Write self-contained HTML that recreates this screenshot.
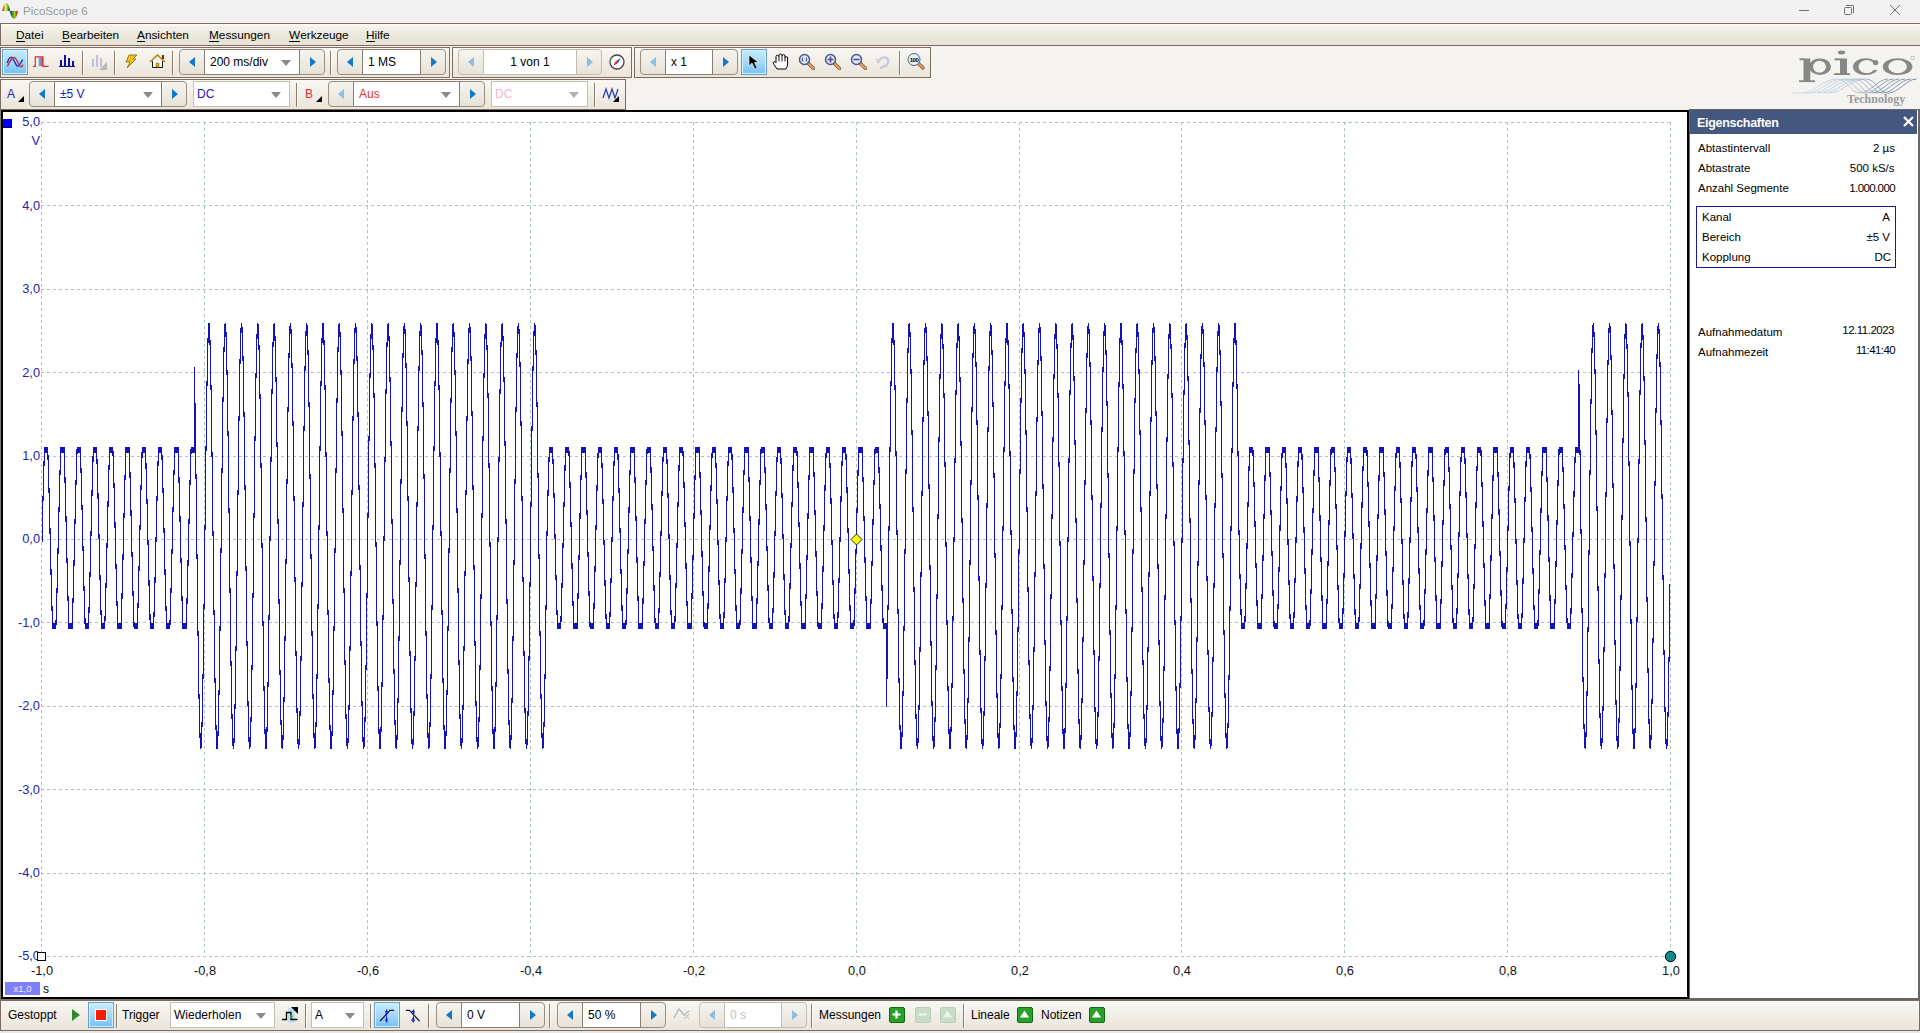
<!DOCTYPE html>
<html><head><meta charset="utf-8">
<style>
*{box-sizing:border-box;margin:0;padding:0}
html,body{width:1920px;height:1033px;overflow:hidden;background:#f5f3ef;font-family:"Liberation Sans",sans-serif;font-size:11.5px;color:#000}
.a{position:absolute}
#title{left:0;top:0;width:1920px;height:23px;background:#f2f1f2}
#title .t{left:23px;top:5px;color:#999;font-size:11.5px}
#menu{left:0;top:23px;width:1920px;height:23px;border-top:1px solid #7c6c5e;border-bottom:1px solid #7c6c5e;border-left:1px solid #7c6c5e;background:linear-gradient(#fefdf8 0px,#f3f1e9 3px,#ebe8dc 12px,#e8e4d6 16px,#ebe3d8 21px)}
#menu span{position:absolute;top:3.5px;font-size:11.8px;color:#000}
#menu u{text-decoration:none;border-bottom:1px solid #000;display:inline-block;line-height:11px}
.band{position:absolute;border:1px solid #7c6c5e;background:linear-gradient(#f8f7f3,#ebe5da)}
.sep{position:absolute;width:2px;background:#8a7d70;border-right:1px solid #fcfaf6}
.nav{position:absolute;height:26px;border:1px solid #9b8d80;border-radius:4px;background:linear-gradient(#f6f4f0,#e7e2d8)}
.nav .in{position:absolute;top:0;bottom:0;background:#fff;border-left:1px solid #9b8d80;border-right:1px solid #9b8d80}
.tri{position:absolute;width:0;height:0;border-top:5px solid transparent;border-bottom:5px solid transparent}
.tl{border-right:6px solid #1a7ccc}
.tr{border-left:6px solid #1a7ccc}
.dis.tl{border-right-color:#82b4dc}
.dis.tr{border-left-color:#82b4dc}
.dd{position:absolute;width:0;height:0;border-left:5px solid transparent;border-right:5px solid transparent;border-top:6px solid #8a8a8a}
.combo{position:absolute;height:26px;background:#fff;border:1px solid #b8b0a6}
.txt{position:absolute;white-space:pre}
.selbtn{position:absolute;background:linear-gradient(#c8ecfc,#a6d8fa 50%,#74c0f8);border:1px solid #6c9ccc;box-shadow:inset 0 0 0 1px #d0f2ff}
#scope{left:1px;top:110px;width:1688px;height:889px;border:2px solid #000;background:#fff;overflow:hidden}
.yl{position:absolute;left:0;width:40px;text-align:right;color:#2525a8;font-size:12.8px}
.xl{position:absolute;top:963px;width:60px;text-align:center;color:#111;font-size:12.8px}
#panel{left:1689px;top:109px;width:231px;height:891px;background:#fff;border-right:2px solid #666;border-bottom:2px solid #666;border-top:1px solid #666;border-left:1px solid #666}
#phead{left:0;top:0;width:227px;height:24px;background:#44577e;color:#fff;font-weight:bold;font-size:12.5px;letter-spacing:-0.3px}
.pr{position:absolute;font-size:11.5px;white-space:pre}
#bottom{left:0;top:1000px;width:1920px;height:31px;border:1px solid #7c6c5e;background:linear-gradient(#f8f7f3,#ebe5da)}
</style></head><body>

<!-- title bar -->
<div id="title" class="a">
  <svg class="a" style="left:0;top:0" width="22" height="22">
    <defs><linearGradient id="ig1" x1="2" x2="10" y1="0" y2="0" gradientUnits="userSpaceOnUse"><stop offset="0" stop-color="#6a1a10"/><stop offset="0.3" stop-color="#e8a030"/><stop offset="0.45" stop-color="#f4f080"/><stop offset="0.65" stop-color="#70e030"/><stop offset="1" stop-color="#101870"/></linearGradient>
    <linearGradient id="ig2" x1="10" x2="18" y1="0" y2="0" gradientUnits="userSpaceOnUse"><stop offset="0" stop-color="#101870"/><stop offset="0.35" stop-color="#30b020"/><stop offset="0.6" stop-color="#c0c030"/><stop offset="0.8" stop-color="#b05010"/><stop offset="1" stop-color="#601010"/></linearGradient></defs>
    <path d="M2.2 11C3.5 5 5 3 6.3 3S9 5.5 10.2 11z" fill="url(#ig1)"/>
    <path d="M9.8 11C11 16.5 12.5 18.8 14 18.8S16.8 16.5 17.9 11z" fill="url(#ig2)"/>
  </svg>
  <div class="a t">PicoScope 6</div>
  <div class="a" style="left:1799px;top:10px;width:10px;height:1px;background:#707070"></div>
  <div class="a" style="left:1844px;top:7px;width:8px;height:8px;border:1px solid #707070;border-radius:1.5px"></div>
  <div class="a" style="left:1846px;top:5px;width:8px;height:8px;border-top:1px solid #707070;border-right:1px solid #707070;border-top-right-radius:2px"></div>
  <svg class="a" style="left:1890px;top:5px" width="10" height="10"><path d="M0 0L10 10M10 0L0 10" stroke="#707070" stroke-width="1"/></svg>
</div>

<!-- menu -->
<div id="menu" class="a">
  <span style="left:15px"><u>D</u>atei</span>
  <span style="left:61px"><u>B</u>earbeiten</span>
  <span style="left:136px"><u>A</u>nsichten</span>
  <span style="left:208px"><u>M</u>essungen</span>
  <span style="left:288px"><u>W</u>erkzeuge</span>
  <span style="left:365px"><u>H</u>ilfe</span>
</div>



<!-- toolbars -->
<div class="band" style="left:0px;top:47px;width:450px;height:31px"></div><div class="band" style="left:452px;top:47px;width:180px;height:31px"></div><div class="band" style="left:634px;top:47px;width:297px;height:31px"></div><div class="selbtn" style="left:2px;top:49px;width:26px;height:26px"></div><svg class="a" style="left:0;top:46px" width="30" height="30"><path d="M7.2 17C8.5 13 10 11.2 11.4 11.2C13.5 11.2 15.5 20.1 17.7 20.1C19.5 20.1 21 16.5 22.6 13.6" fill="none" stroke="#2838c8" stroke-width="1.5"/><path d="M7.4 20.5C9.5 16 12 11.5 14.3 11.5C16.5 11.5 19 20.8 21.1 20.8C22 20.8 22.6 19.6 22.9 18.6" fill="none" stroke="#c83048" stroke-width="1.5"/></svg><svg class="a" style="left:28px;top:48px" width="24" height="22"><defs><linearGradient id="pg" x1="0" x2="1" y1="0" y2="0"><stop offset="0" stop-color="#70b8e8"/><stop offset="1" stop-color="#c84060"/></linearGradient></defs><rect x="10.5" y="9.3" width="4.5" height="9" fill="url(#pg)"/><path d="M5 18.4H7.3V8.8H15V18.4H20.5" fill="none" stroke="#d83030" stroke-width="1.2"/></svg><svg class="a" style="left:59px;top:54px" width="17" height="13"><path d="M0 12.5H16" stroke="#101090" stroke-width="1.2"/><rect x="1" y="6" width="2" height="6" fill="#1010a0"/><rect x="5" y="1" width="2" height="11" fill="#1010a0"/><rect x="9" y="4" width="2" height="8" fill="#1010a0"/><rect x="13" y="7" width="2" height="5" fill="#1010a0"/></svg><div class="sep" style="left:82px;top:51px;height:24px"></div><svg class="a" style="left:91px;top:54px" width="17" height="16"><rect x="1" y="5" width="2" height="8" fill="#c0c0dc"/><rect x="5" y="1" width="2" height="12" fill="#c0c0dc"/><rect x="9" y="4" width="2" height="9" fill="#c0c0dc"/><path d="M16 8V16H8z" fill="#b8b8b8"/></svg><div class="sep" style="left:114px;top:51px;height:24px"></div><svg class="a" style="left:124px;top:54px" width="14" height="15"><path d="M5 1H13L9 5H12L3 14L6 8H2z" fill="#e8c020" stroke="#a07a10" stroke-width="1"/></svg><svg class="a" style="left:149px;top:54px" width="17" height="15"><path d="M1 8L8.5 1L16 8" fill="none" stroke="#b08a10" stroke-width="1.6"/><rect x="13" y="1" width="2" height="4" fill="#902020"/><path d="M3.5 7V13.5H13.5V7" fill="#fff" stroke="#1a1a1a" stroke-width="1"/><rect x="7" y="9" width="3" height="4" fill="#d8a820" stroke="#806010" stroke-width="0.5"/></svg><div class="sep" style="left:172px;top:51px;height:24px"></div><div class="nav" style="left:179px;top:49px;width:146px;height:26px;border-color:#9b8d80"></div><div class="a" style="left:204px;top:49px;width:96px;height:26px;background:#fff;border:1px solid #8c7d70;border-left-width:1px"></div><svg class="a" style="left:189px;top:57px" width="6" height="10"><path d="M6 0V10L0 5z" fill="#1478c8"/></svg><svg class="a" style="left:310px;top:57px" width="6" height="10"><path d="M0 0V10L6 5z" fill="#1478c8"/></svg><div class="txt" style="left:210px;top:55px;color:#000;font-size:12px;">200 ms/div</div><svg class="a" style="left:281px;top:60px" width="10" height="6"><path d="M0 0H10L5 6z" fill="#8a8a8a"/></svg><div class="sep" style="left:330px;top:51px;height:24px"></div><div class="nav" style="left:337px;top:49px;width:109px;height:26px;border-color:#9b8d80"></div><div class="a" style="left:362px;top:49px;width:59px;height:26px;background:#fff;border:1px solid #8c7d70;border-left-width:1px"></div><svg class="a" style="left:347px;top:57px" width="6" height="10"><path d="M6 0V10L0 5z" fill="#1478c8"/></svg><svg class="a" style="left:431px;top:57px" width="6" height="10"><path d="M0 0V10L6 5z" fill="#1478c8"/></svg><div class="txt" style="left:368px;top:55px;color:#000;font-size:12px;">1 MS</div><div class="nav" style="left:458px;top:49px;width:144px;height:26px;border-color:#c4bcb2"></div><div class="a" style="left:483px;top:49px;width:94px;height:26px;background:#fff;border:1px solid #c4bcb2;border-left-width:1px"></div><svg class="a" style="left:468px;top:57px" width="6" height="10"><path d="M6 0V10L0 5z" fill="#8cbde3"/></svg><svg class="a" style="left:587px;top:57px" width="6" height="10"><path d="M0 0V10L6 5z" fill="#8cbde3"/></svg><div class="txt" style="left:483px;top:55px;width:94px;text-align:center;color:#000;font-size:12px">1 von 1</div><svg class="a" style="left:609px;top:54px" width="16" height="16"><circle cx="8" cy="8" r="7" fill="#fff" stroke="#444" stroke-width="1.3"/><path d="M12 4L7 7L9 9z" fill="#3050e0"/><path d="M4 12L7 7L9 9z" fill="#e02020"/></svg><div class="nav" style="left:640px;top:49px;width:98px;height:26px;border-color:#9b8d80"></div><div class="a" style="left:665px;top:49px;width:48px;height:26px;background:#fff;border:1px solid #8c7d70;border-left-width:1px"></div><svg class="a" style="left:650px;top:57px" width="6" height="10"><path d="M6 0V10L0 5z" fill="#8cbde3"/></svg><svg class="a" style="left:723px;top:57px" width="6" height="10"><path d="M0 0V10L6 5z" fill="#1478c8"/></svg><div class="txt" style="left:671px;top:55px;color:#000;font-size:12px;">x 1</div><div class="selbtn" style="left:741px;top:49px;width:26px;height:26px"></div><svg class="a" style="left:748px;top:54px" width="12" height="16"><path d="M1 1V12L4 9L7 15L9 14L6.5 8.5H10.5z" fill="#000" stroke="#fff" stroke-width="0.6"/></svg><svg class="a" style="left:772px;top:53px" width="17" height="17"><path d="M5 16L2 11.5Q0.3 9.3 2 8.6Q3 8.3 4 9.8L4 3.6Q4 2.2 5.5 2.2Q7 2.2 7 3.6L7 2.4Q7 1 8.5 1Q10 1 10 2.4L10 3Q10 1.6 11.5 1.6Q13 1.6 13 3L13 5Q13 3.6 14.3 3.6Q15.6 3.6 15.6 5L15.6 11Q15.6 14 13.8 16Z" fill="#fff" stroke="#000" stroke-width="1"/><path d="M7 3.5V8.5M10 3V8.5M13 5V8.5" stroke="#000" stroke-width="0.9"/></svg><svg class="a" style="left:798px;top:53px" width="17" height="17"><path d="M10 10L15.5 15.5" stroke="#8a5a30" stroke-width="3.4" stroke-linecap="round"/><path d="M10 10L15.5 15.5" stroke="#e0a070" stroke-width="1.8" stroke-linecap="round"/><circle cx="6.5" cy="6.5" r="5" fill="#dceefa" stroke="#4a5a88" stroke-width="1.5"/><path d="M5 4.5Q3.6 6.5 5 8.5M8 4.5Q9.4 6.5 8 8.5" fill="none" stroke="#5050a0" stroke-width="1.1"/></svg><svg class="a" style="left:824px;top:53px" width="17" height="17"><path d="M10 10L15.5 15.5" stroke="#8a5a30" stroke-width="3.4" stroke-linecap="round"/><path d="M10 10L15.5 15.5" stroke="#e0a070" stroke-width="1.8" stroke-linecap="round"/><circle cx="6.5" cy="6.5" r="5" fill="#dceefa" stroke="#4a5a88" stroke-width="1.5"/><path d="M6.5 3.5V9.5M3.5 6.5H9.5" stroke="#6040a0" stroke-width="1.6"/></svg><svg class="a" style="left:850px;top:53px" width="17" height="17"><path d="M10 10L15.5 15.5" stroke="#8a5a30" stroke-width="3.4" stroke-linecap="round"/><path d="M10 10L15.5 15.5" stroke="#e0a070" stroke-width="1.8" stroke-linecap="round"/><circle cx="6.5" cy="6.5" r="5" fill="#dceefa" stroke="#4a5a88" stroke-width="1.5"/><path d="M3.5 6.5H9.5" stroke="#6040a0" stroke-width="1.6"/></svg><svg class="a" style="left:876px;top:55px" width="15" height="15"><path d="M4 13L9.5 11C13 9 13 3 9 2.5C6 2 4 4 3 6" fill="none" stroke="#c8ccd8" stroke-width="2.4"/><path d="M0 3L5 8L1 8z" fill="#c8ccd8"/></svg><div class="sep" style="left:899px;top:51px;height:24px"></div><svg class="a" style="left:907px;top:53px" width="19" height="17"><path d="M11 10L16 15" stroke="#8a5a30" stroke-width="3.2" stroke-linecap="round"/><path d="M11 10L16 15" stroke="#e8a070" stroke-width="1.7" stroke-linecap="round"/><circle cx="7" cy="6.5" r="6" fill="#e4f2fc" stroke="#506080" stroke-width="1"/><text x="7" y="8.7" font-size="6" font-weight="bold" text-anchor="middle" font-family="Liberation Sans" fill="#000" letter-spacing="-0.5">100</text></svg><div class="band" style="left:0px;top:79px;width:626px;height:31px"></div><div class="txt" style="left:7px;top:87px;color:#2020c0;font-size:12px;">A</div><svg class="a" style="left:18px;top:96px" width="6" height="6"><path d="M6 0V6H0z" fill="#000"/></svg><div class="nav" style="left:29px;top:81px;width:158px;height:26px;border-color:#9b8d80"></div><div class="a" style="left:54px;top:81px;width:108px;height:26px;background:#fff;border:1px solid #8c7d70;border-left-width:1px"></div><svg class="a" style="left:39px;top:89px" width="6" height="10"><path d="M6 0V10L0 5z" fill="#1478c8"/></svg><svg class="a" style="left:172px;top:89px" width="6" height="10"><path d="M0 0V10L6 5z" fill="#1478c8"/></svg><div class="txt" style="left:60px;top:87px;color:#2020c0;font-size:12px;">±5 V</div><svg class="a" style="left:143px;top:92px" width="10" height="6"><path d="M0 0H10L5 6z" fill="#8a8a8a"/></svg><div class="a" style="left:193px;top:81px;width:97px;height:26px;background:#fff;border:1px solid #c6beb4"></div><div class="txt" style="left:197px;top:87px;color:#2020c0;font-size:12px;">DC</div><svg class="a" style="left:271px;top:92px" width="10" height="6"><path d="M0 0H10L5 6z" fill="#8a8a8a"/></svg><div class="sep" style="left:296px;top:83px;height:24px"></div><div class="txt" style="left:305px;top:87px;color:#e03030;font-size:12px;">B</div><svg class="a" style="left:316px;top:96px" width="6" height="6"><path d="M6 0V6H0z" fill="#000"/></svg><div class="nav" style="left:328px;top:81px;width:157px;height:26px;border-color:#9b8d80"></div><div class="a" style="left:353px;top:81px;width:107px;height:26px;background:#fff;border:1px solid #8c7d70;border-left-width:1px"></div><svg class="a" style="left:338px;top:89px" width="6" height="10"><path d="M6 0V10L0 5z" fill="#8cbde3"/></svg><svg class="a" style="left:470px;top:89px" width="6" height="10"><path d="M0 0V10L6 5z" fill="#1478c8"/></svg><div class="txt" style="left:359px;top:87px;color:#e03030;font-size:12px;">Aus</div><svg class="a" style="left:441px;top:92px" width="10" height="6"><path d="M0 0H10L5 6z" fill="#8a8a8a"/></svg><div class="a" style="left:491px;top:81px;width:97px;height:26px;background:#fff;border:1px solid #c6beb4"></div><div class="txt" style="left:495px;top:87px;color:#f0b8c8;font-size:12px;">DC</div><svg class="a" style="left:569px;top:92px" width="10" height="6"><path d="M0 0H10L5 6z" fill="#b0b0b0"/></svg><div class="sep" style="left:594px;top:83px;height:24px"></div><svg class="a" style="left:602px;top:87px" width="18" height="16"><path d="M1 11L4 2L7 11L10 2L13 11L16 2" fill="none" stroke="#3040b0" stroke-width="1.3"/><path d="M17 9V15H11z" fill="#000"/></svg>

<!-- logo -->
<svg class="a" style="left:1790px;top:45px" width="130" height="63">
  <defs><linearGradient id="lg" x1="0" x2="130" y1="0" y2="0" gradientUnits="userSpaceOnUse"><stop offset="0" stop-color="#d4e4f0"/><stop offset="0.45" stop-color="#b4cce0"/><stop offset="0.7" stop-color="#8498ac"/><stop offset="1" stop-color="#6e7e92"/></linearGradient></defs>
  <g fill="none" stroke-width="0.9"><path d="M10.0 48C25.0 48 32.0 34 47.0 34C58.0 34 60.0 48 70.0 48C80.0 48 88.0 34 98.0 34" stroke="url(#lg)"/><path d="M15.7 48C30.7 48 37.7 34 52.7 34C63.7 34 65.7 48 75.7 48C85.7 48 93.7 34 103.7 34" stroke="url(#lg)"/><path d="M21.4 48C36.4 48 43.4 34 58.4 34C69.4 34 71.4 48 81.4 48C91.4 48 99.4 34 109.4 34" stroke="url(#lg)"/><path d="M27.1 48C42.1 48 49.1 34 64.1 34C75.1 34 77.1 48 87.1 48C97.1 48 105.1 34 115.1 34" stroke="url(#lg)"/><path d="M32.8 48C47.8 48 54.8 34 69.8 34C80.8 34 82.8 48 92.8 48C102.8 48 110.8 34 120.8 34" stroke="url(#lg)"/><path d="M38.5 48C53.5 48 60.5 34 75.5 34C86.5 34 88.5 48 98.5 48C108.5 48 116.5 34 126.5 34" stroke="url(#lg)"/>
    <path d="M2 48H20" stroke="#cfe0ee"/>
  </g>
  <g fill="#878787">
    <rect x="13.5" y="13.5" width="6.8" height="23"/>
    <rect x="9" y="35.3" width="16" height="1.8"/>
    <rect x="9.5" y="13.3" width="5" height="2"/>
    <path fill-rule="evenodd" d="M19 21.7a11 8.3 0 1 0 22 0a11 8.3 0 1 0 -22 0zM23 21.7a6.5 6 0 1 0 13 0a6.5 6 0 1 0 -13 0z"/>
    <rect x="50" y="13.5" width="7" height="16.3"/>
    <rect x="44" y="28.2" width="16" height="1.8"/>
    <rect x="44.5" y="13.3" width="6" height="2"/>
    <ellipse cx="51.5" cy="7.5" rx="3.6" ry="1.9"/>
    <path fill-rule="evenodd" d="M63 21.7a12.7 8.4 0 1 0 25.4 0a12.7 8.4 0 1 0 -25.4 0zM68.5 21.7a8.2 6.6 0 1 0 16.4 0a8.2 6.6 0 1 0 -16.4 0z"/>
    <path fill-rule="evenodd" d="M92.8 21.7a14.8 8.4 0 1 0 29.6 0a14.8 8.4 0 1 0 -29.6 0zM98.3 21.7a9.3 6.6 0 1 0 18.6 0a9.3 6.6 0 1 0 -18.6 0z"/>
  </g>
  <rect x="79" y="18.8" width="11" height="6.3" fill="#f5f3ef"/>
  <circle cx="85.6" cy="17.6" r="2.7" fill="#878787"/>
  <circle cx="122.5" cy="13" r="1.8" fill="none" stroke="#a0a0a0" stroke-width="0.6"/>
  <text x="57" y="58.3" font-family="Liberation Serif" font-weight="bold" font-size="12" fill="#9a9a9a">Technology</text>
</svg>

<!-- scope -->
<div id="scope" class="a"></div>
<svg class="a" style="left:0;top:0" width="1690" height="1000" shape-rendering="crispEdges">
  <path d="M41.5 122V957" stroke="#abc3c7" stroke-dasharray="3 3"/><path d="M204.5 122V957" stroke="#abc3c7" stroke-dasharray="3 3"/><path d="M367.5 122V957" stroke="#abc3c7" stroke-dasharray="3 3"/><path d="M530.5 122V957" stroke="#abc3c7" stroke-dasharray="3 3"/><path d="M693.5 122V957" stroke="#abc3c7" stroke-dasharray="3 3"/><path d="M856.5 122V957" stroke="#abc3c7" stroke-dasharray="3 3"/><path d="M1019.5 122V957" stroke="#abc3c7" stroke-dasharray="3 3"/><path d="M1181.5 122V957" stroke="#abc3c7" stroke-dasharray="3 3"/><path d="M1344.5 122V957" stroke="#abc3c7" stroke-dasharray="3 3"/><path d="M1507.5 122V957" stroke="#abc3c7" stroke-dasharray="3 3"/><path d="M1670.5 122V957" stroke="#abc3c7" stroke-dasharray="3 3"/><path d="M41 122.5H1671" stroke="#abc3c7" stroke-dasharray="3 3"/><path d="M41 205.5H1671" stroke="#abc3c7" stroke-dasharray="3 3"/><path d="M41 289.5H1671" stroke="#abc3c7" stroke-dasharray="3 3"/><path d="M41 372.5H1671" stroke="#abc3c7" stroke-dasharray="3 3"/><path d="M41 456.5H1671" stroke="#abc3c7" stroke-dasharray="3 3"/><path d="M41 539.5H1671" stroke="#abc3c7" stroke-dasharray="3 3"/><path d="M41 622.5H1671" stroke="#abc3c7" stroke-dasharray="3 3"/><path d="M41 706.5H1671" stroke="#abc3c7" stroke-dasharray="3 3"/><path d="M41 789.5H1671" stroke="#abc3c7" stroke-dasharray="3 3"/><path d="M41 873.5H1671" stroke="#abc3c7" stroke-dasharray="3 3"/><path d="M41 956.5H1671" stroke="#abc3c7" stroke-dasharray="3 3"/>
  <path d="M42.5 496v46M43.5 461v40M44.5 447v19M45.5 447v6M46.5 447v6M47.5 447v13M48.5 455v38M49.5 488v46M50.5 528v47M51.5 569v42M52.5 606v23M53.5 623v6M54.5 623v6M55.5 620v9M56.5 588v37M57.5 548v45M58.5 507v47M59.5 470v42M60.5 447v28M61.5 447v6M62.5 447v6M63.5 447v6M64.5 447v36M65.5 477v45M66.5 516v47M67.5 558v43M68.5 596v33M69.5 623v6M70.5 623v6M71.5 623v6M72.5 598v31M73.5 560v43M74.5 519v47M75.5 480v44M76.5 449v36M77.5 447v7M78.5 447v6M79.5 447v6M80.5 447v26M81.5 468v42M82.5 505v46M83.5 546v45M84.5 586v38M85.5 618v11M86.5 623v6M87.5 623v6M88.5 607v22M89.5 572v41M90.5 531v46M91.5 490v46M92.5 456v40M93.5 447v15M94.5 447v6M95.5 447v6M96.5 447v17M97.5 459v40M98.5 493v46M99.5 534v46M100.5 575v40M101.5 610v19M102.5 623v6M103.5 623v6M104.5 616v13M105.5 583v38M106.5 543v45M107.5 501v47M108.5 465v42M109.5 447v23M110.5 447v6M111.5 447v6M112.5 447v9M113.5 451v37M114.5 483v45M115.5 522v47M116.5 564v42M117.5 601v28M118.5 623v6M119.5 623v6M120.5 623v6M121.5 593v36M122.5 554v45M123.5 513v47M124.5 475v43M125.5 447v33M126.5 447v6M127.5 447v6M128.5 447v6M129.5 447v31M130.5 472v44M131.5 510v47M132.5 552v44M133.5 591v36M134.5 622v7M135.5 623v6M136.5 623v6M137.5 603v26M138.5 566v42M139.5 525v46M140.5 485v45M141.5 452v38M142.5 447v11M143.5 447v6M144.5 447v6M145.5 447v22M146.5 463v41M147.5 499v46M148.5 540v46M149.5 580v40M150.5 614v15M151.5 623v6M152.5 623v6M153.5 612v17M154.5 577v40M155.5 537v46M156.5 496v46M157.5 461v40M158.5 447v19M159.5 447v6M160.5 447v6M161.5 447v13M162.5 455v38M163.5 488v45M164.5 528v47M165.5 569v42M166.5 606v23M167.5 623v6M168.5 623v6M169.5 620v9M170.5 588v37M171.5 549v44M172.5 507v47M173.5 470v42M174.5 447v28M175.5 447v6M176.5 447v6M177.5 447v6M178.5 447v36M179.5 477v45M180.5 516v47M181.5 558v43M182.5 596v33M183.5 623v6M184.5 623v6M185.5 623v6M186.5 598v31M187.5 560v44M188.5 519v47M189.5 480v44M190.5 449v36M191.5 447v7M192.5 447v6M193.5 447v6M194.5 367v86M195.5 403v76M196.5 474v85M197.5 554v82M198.5 631v68M199.5 694v44M200.5 733v16M201.5 722v26M202.5 674v53M203.5 604v75M204.5 525v84M205.5 446v84M206.5 381v70M207.5 338v48M208.5 323v20M209.5 323v22M210.5 340v50M211.5 385v72M212.5 452v84M213.5 531v84M214.5 610v73M215.5 678v52M216.5 725v24M217.5 731v18M218.5 690v46M219.5 626v69M220.5 548v83M221.5 468v85M222.5 397v76M223.5 347v55M224.5 324v28M225.5 323v14M226.5 332v43M227.5 370v66M228.5 431v82M229.5 508v85M230.5 588v78M231.5 661v58M232.5 714v32M233.5 738v11M234.5 704v39M235.5 646v63M236.5 571v80M237.5 490v86M238.5 416v79M239.5 359v62M240.5 328v36M241.5 323v10M242.5 327v34M243.5 356v61M244.5 412v78M245.5 485v86M246.5 566v80M247.5 641v65M248.5 701v41M249.5 737v12M250.5 717v30M251.5 665v57M252.5 593v77M253.5 513v85M254.5 436v82M255.5 373v68M256.5 334v44M257.5 323v16M258.5 324v26M259.5 345v54M260.5 394v74M261.5 463v85M262.5 543v83M263.5 621v70M264.5 686v48M265.5 729v20M266.5 727v22M267.5 682v50M268.5 615v72M269.5 536v84M270.5 457v84M271.5 389v73M272.5 342v52M273.5 324v23M274.5 323v18M275.5 336v46M276.5 377v70M277.5 442v82M278.5 519v85M279.5 599v76M280.5 670v55M281.5 720v28M282.5 735v14M283.5 697v43M284.5 636v66M285.5 559v82M286.5 479v85M287.5 407v77M288.5 353v59M289.5 326v32M290.5 323v11M291.5 329v39M292.5 363v63M293.5 421v80M294.5 496v86M295.5 577v79M296.5 651v62M297.5 708v36M298.5 739v10M299.5 711v34M300.5 656v60M301.5 582v79M302.5 502v85M303.5 426v81M304.5 366v65M305.5 331v40M306.5 323v13M307.5 325v30M308.5 350v57M309.5 402v77M310.5 474v85M311.5 554v82M312.5 631v68M313.5 694v44M314.5 733v16M315.5 722v26M316.5 674v53M317.5 604v75M318.5 525v84M319.5 446v84M320.5 381v70M321.5 338v48M322.5 323v20M323.5 323v22M324.5 340v50M325.5 385v72M326.5 452v84M327.5 531v84M328.5 610v73M329.5 678v52M330.5 725v24M331.5 731v18M332.5 690v46M333.5 626v69M334.5 548v83M335.5 468v85M336.5 398v75M337.5 347v56M338.5 324v28M339.5 323v14M340.5 332v43M341.5 370v66M342.5 431v82M343.5 508v85M344.5 588v77M345.5 660v59M346.5 714v32M347.5 738v11M348.5 705v38M349.5 646v64M350.5 571v80M351.5 490v86M352.5 416v79M353.5 359v62M354.5 328v36M355.5 323v10M356.5 327v34M357.5 356v61M358.5 412v78M359.5 485v85M360.5 565v81M361.5 641v65M362.5 701v41M363.5 737v12M364.5 717v30M365.5 665v57M366.5 593v77M367.5 513v85M368.5 436v82M369.5 373v68M370.5 334v44M371.5 323v16M372.5 324v26M373.5 345v53M374.5 393v75M375.5 463v84M376.5 542v84M377.5 621v70M378.5 686v48M379.5 729v20M380.5 727v22M381.5 682v50M382.5 615v72M383.5 536v84M384.5 457v84M385.5 389v73M386.5 342v52M387.5 324v23M388.5 323v18M389.5 336v46M390.5 377v69M391.5 441v83M392.5 519v85M393.5 599v75M394.5 669v56M395.5 720v28M396.5 735v14M397.5 698v42M398.5 636v67M399.5 560v81M400.5 479v86M401.5 407v77M402.5 353v59M403.5 326v32M404.5 323v11M405.5 329v39M406.5 363v63M407.5 421v80M408.5 496v86M409.5 577v79M410.5 651v62M411.5 708v36M412.5 739v10M413.5 711v34M414.5 656v60M415.5 582v79M416.5 502v85M417.5 426v81M418.5 366v65M419.5 331v40M420.5 323v13M421.5 325v30M422.5 350v57M423.5 402v77M424.5 474v85M425.5 554v82M426.5 631v68M427.5 694v44M428.5 733v16M429.5 722v26M430.5 674v53M431.5 605v74M432.5 525v85M433.5 446v84M434.5 381v70M435.5 338v48M436.5 323v20M437.5 323v22M438.5 340v50M439.5 385v72M440.5 452v84M441.5 531v84M442.5 610v73M443.5 678v52M444.5 725v24M445.5 731v18M446.5 690v46M447.5 626v69M448.5 548v83M449.5 468v85M450.5 398v75M451.5 347v56M452.5 324v28M453.5 323v14M454.5 332v43M455.5 370v66M456.5 431v82M457.5 508v85M458.5 588v77M459.5 660v59M460.5 714v32M461.5 738v11M462.5 705v38M463.5 646v64M464.5 571v80M465.5 490v86M466.5 416v79M467.5 359v62M468.5 328v36M469.5 323v10M470.5 327v34M471.5 356v60M472.5 411v79M473.5 485v85M474.5 565v81M475.5 641v65M476.5 701v41M477.5 737v12M478.5 717v30M479.5 665v57M480.5 594v76M481.5 513v86M482.5 436v82M483.5 373v68M484.5 334v44M485.5 323v16M486.5 324v26M487.5 345v53M488.5 393v75M489.5 463v84M490.5 542v84M491.5 621v70M492.5 686v48M493.5 729v20M494.5 727v22M495.5 682v50M496.5 615v72M497.5 537v83M498.5 457v85M499.5 389v73M500.5 342v52M501.5 324v23M502.5 323v18M503.5 336v46M504.5 377v69M505.5 441v83M506.5 519v85M507.5 599v75M508.5 669v56M509.5 720v28M510.5 735v14M511.5 698v42M512.5 636v67M513.5 560v81M514.5 479v86M515.5 407v77M516.5 353v59M517.5 326v32M518.5 323v11M519.5 329v38M520.5 362v64M521.5 421v80M522.5 496v86M523.5 577v79M524.5 651v62M525.5 708v36M526.5 739v10M527.5 711v34M528.5 656v60M529.5 582v79M530.5 502v85M531.5 426v81M532.5 366v65M533.5 331v40M534.5 323v13M535.5 325v30M536.5 350v57M537.5 402v76M538.5 473v86M539.5 554v82M540.5 631v68M541.5 694v44M542.5 733v16M543.5 722v26M544.5 674v53M545.5 605v74M546.5 531v79M547.5 490v46M548.5 457v39M549.5 447v15M550.5 447v6M551.5 447v6M552.5 447v17M553.5 459v39M554.5 493v46M555.5 534v46M556.5 575v40M557.5 610v19M558.5 623v6M559.5 623v6M560.5 616v13M561.5 583v39M562.5 543v45M563.5 502v46M564.5 465v42M565.5 447v24M566.5 447v6M567.5 447v6M568.5 447v9M569.5 451v37M570.5 482v45M571.5 522v47M572.5 563v43M573.5 601v28M574.5 623v6M575.5 623v6M576.5 623v6M577.5 593v36M578.5 555v44M579.5 513v47M580.5 475v44M581.5 447v33M582.5 447v6M583.5 447v6M584.5 447v6M585.5 447v31M586.5 472v43M587.5 510v47M588.5 552v44M589.5 591v36M590.5 622v7M591.5 623v6M592.5 623v6M593.5 603v26M594.5 566v43M595.5 525v47M596.5 485v45M597.5 453v38M598.5 447v11M599.5 447v6M600.5 447v6M601.5 447v21M602.5 463v41M603.5 499v46M604.5 540v46M605.5 580v39M606.5 614v15M607.5 623v6M608.5 623v6M609.5 612v17M610.5 578v39M611.5 537v46M612.5 496v46M613.5 461v40M614.5 447v19M615.5 447v6M616.5 447v6M617.5 447v13M618.5 454v39M619.5 488v45M620.5 528v46M621.5 569v42M622.5 605v24M623.5 623v6M624.5 623v6M625.5 620v9M626.5 588v37M627.5 549v45M628.5 507v47M629.5 470v43M630.5 447v28M631.5 447v6M632.5 447v6M633.5 447v6M634.5 447v36M635.5 477v44M636.5 516v47M637.5 557v44M638.5 596v33M639.5 623v6M640.5 623v6M641.5 623v6M642.5 598v31M643.5 561v43M644.5 519v47M645.5 480v44M646.5 449v36M647.5 447v7M648.5 447v6M649.5 447v6M650.5 447v26M651.5 467v43M652.5 504v47M653.5 546v45M654.5 585v38M655.5 618v11M656.5 623v6M657.5 623v6M658.5 608v21M659.5 572v41M660.5 531v46M661.5 491v45M662.5 457v39M663.5 447v15M664.5 447v6M665.5 447v6M666.5 447v17M667.5 459v39M668.5 493v46M669.5 534v46M670.5 575v40M671.5 610v19M672.5 623v6M673.5 623v6M674.5 616v13M675.5 583v39M676.5 543v45M677.5 502v46M678.5 465v42M679.5 447v24M680.5 447v6M681.5 447v6M682.5 447v9M683.5 451v37M684.5 482v45M685.5 522v47M686.5 563v43M687.5 601v28M688.5 623v6M689.5 623v6M690.5 623v6M691.5 593v36M692.5 555v44M693.5 513v47M694.5 475v44M695.5 447v33M696.5 447v6M697.5 447v6M698.5 447v6M699.5 447v31M700.5 472v43M701.5 510v47M702.5 551v45M703.5 591v36M704.5 622v7M705.5 623v6M706.5 623v6M707.5 603v26M708.5 566v43M709.5 525v47M710.5 485v45M711.5 453v38M712.5 447v11M713.5 447v6M714.5 447v6M715.5 447v21M716.5 463v41M717.5 499v46M718.5 540v45M719.5 580v39M720.5 614v15M721.5 623v6M722.5 623v6M723.5 612v17M724.5 578v40M725.5 537v46M726.5 496v46M727.5 461v40M728.5 447v19M729.5 447v6M730.5 447v6M731.5 447v13M732.5 454v39M733.5 487v46M734.5 528v46M735.5 569v42M736.5 605v24M737.5 623v6M738.5 623v6M739.5 620v9M740.5 588v37M741.5 549v45M742.5 507v47M743.5 470v43M744.5 447v28M745.5 447v6M746.5 447v6M747.5 447v6M748.5 447v35M749.5 477v44M750.5 516v47M751.5 557v44M752.5 596v33M753.5 623v6M754.5 623v6M755.5 623v6M756.5 598v31M757.5 561v43M758.5 519v47M759.5 480v45M760.5 449v36M761.5 447v7M762.5 447v6M763.5 447v6M764.5 447v26M765.5 467v43M766.5 504v47M767.5 546v45M768.5 585v38M769.5 618v11M770.5 623v6M771.5 623v6M772.5 608v21M773.5 572v41M774.5 531v47M775.5 491v45M776.5 457v39M777.5 447v15M778.5 447v6M779.5 447v6M780.5 447v17M781.5 458v40M782.5 493v46M783.5 534v46M784.5 574v41M785.5 610v19M786.5 623v6M787.5 623v6M788.5 616v13M789.5 583v39M790.5 543v46M791.5 502v46M792.5 465v42M793.5 447v24M794.5 447v6M795.5 447v6M796.5 447v9M797.5 451v37M798.5 482v45M799.5 522v47M800.5 563v43M801.5 601v28M802.5 623v6M803.5 623v6M804.5 623v6M805.5 594v35M806.5 555v44M807.5 513v47M808.5 475v44M809.5 447v33M810.5 447v6M811.5 447v6M812.5 447v6M813.5 447v30M814.5 472v43M815.5 510v47M816.5 551v45M817.5 591v36M818.5 622v7M819.5 623v6M820.5 623v6M821.5 603v26M822.5 566v43M823.5 525v47M824.5 485v46M825.5 453v38M826.5 447v11M827.5 447v6M828.5 447v6M829.5 447v21M830.5 463v41M831.5 498v47M832.5 540v45M833.5 580v39M834.5 614v15M835.5 623v6M836.5 623v6M837.5 612v17M838.5 578v40M839.5 537v46M840.5 496v46M841.5 461v41M842.5 447v19M843.5 447v6M844.5 447v6M845.5 447v13M846.5 454v39M847.5 487v46M848.5 528v46M849.5 569v42M850.5 605v24M851.5 623v6M852.5 623v6M853.5 620v9M854.5 588v38M855.5 549v45M856.5 508v46M857.5 470v43M858.5 447v29M859.5 447v6M860.5 447v6M861.5 447v6M862.5 447v35M863.5 477v44M864.5 516v47M865.5 557v44M866.5 596v33M867.5 623v6M868.5 623v6M869.5 623v6M870.5 599v30M871.5 561v43M872.5 519v47M873.5 480v45M874.5 449v36M875.5 447v7M876.5 447v6M877.5 447v6M878.5 447v26M879.5 467v42M880.5 504v47M881.5 545v46M882.5 585v38M883.5 618v11M884.5 623v6M885.5 623v6M886.5 623v84M887.5 605v74M888.5 526v84M889.5 447v84M890.5 381v71M891.5 338v48M892.5 323v20M893.5 323v22M894.5 340v50M895.5 385v71M896.5 451v84M897.5 530v84M898.5 609v74M899.5 678v52M900.5 725v24M901.5 732v17M902.5 691v46M903.5 626v70M904.5 549v82M905.5 469v85M906.5 398v76M907.5 348v55M908.5 324v29M909.5 323v14M910.5 332v42M911.5 369v66M912.5 430v82M913.5 507v85M914.5 587v78M915.5 660v59M916.5 714v32M917.5 738v11M918.5 705v38M919.5 647v63M920.5 572v80M921.5 491v86M922.5 417v79M923.5 360v62M924.5 328v37M925.5 323v10M926.5 327v34M927.5 356v60M928.5 411v78M929.5 484v86M930.5 565v81M931.5 641v65M932.5 701v40M933.5 736v13M934.5 717v30M935.5 665v57M936.5 594v76M937.5 514v85M938.5 437v82M939.5 374v68M940.5 334v45M941.5 323v16M942.5 324v25M943.5 344v54M944.5 393v74M945.5 462v85M946.5 542v83M947.5 620v71M948.5 686v48M949.5 729v20M950.5 727v22M951.5 683v49M952.5 616v72M953.5 537v84M954.5 458v84M955.5 390v73M956.5 343v52M957.5 324v24M958.5 323v18M959.5 336v46M960.5 377v69M961.5 441v82M962.5 518v85M963.5 598v76M964.5 669v55M965.5 719v29M966.5 735v14M967.5 698v42M968.5 637v66M969.5 560v82M970.5 480v85M971.5 407v78M972.5 353v59M973.5 326v32M974.5 323v11M975.5 329v38M976.5 362v63M977.5 420v80M978.5 495v86M979.5 576v79M980.5 650v63M981.5 708v36M982.5 739v10M983.5 711v35M984.5 656v60M985.5 583v78M986.5 503v85M987.5 427v81M988.5 366v66M989.5 331v40M990.5 323v13M991.5 325v30M992.5 350v57M993.5 402v76M994.5 473v85M995.5 553v82M996.5 630v68M997.5 693v45M998.5 733v16M999.5 723v25M1000.5 674v54M1001.5 605v74M1002.5 526v84M1003.5 447v84M1004.5 381v71M1005.5 338v48M1006.5 323v20M1007.5 323v22M1008.5 340v49M1009.5 384v72M1010.5 451v84M1011.5 530v84M1012.5 609v73M1013.5 677v53M1014.5 725v24M1015.5 732v17M1016.5 691v46M1017.5 627v69M1018.5 549v83M1019.5 469v85M1020.5 398v76M1021.5 348v55M1022.5 324v29M1023.5 323v14M1024.5 332v42M1025.5 369v66M1026.5 430v82M1027.5 507v85M1028.5 587v78M1029.5 660v59M1030.5 714v32M1031.5 738v11M1032.5 705v38M1033.5 647v63M1034.5 572v80M1035.5 491v86M1036.5 417v79M1037.5 360v62M1038.5 328v37M1039.5 323v10M1040.5 327v34M1041.5 356v60M1042.5 411v78M1043.5 484v85M1044.5 564v81M1045.5 640v66M1046.5 701v40M1047.5 736v13M1048.5 717v30M1049.5 666v56M1050.5 594v77M1051.5 514v85M1052.5 437v82M1053.5 374v68M1054.5 334v45M1055.5 323v16M1056.5 324v25M1057.5 344v54M1058.5 393v74M1059.5 462v84M1060.5 541v84M1061.5 620v71M1062.5 686v48M1063.5 729v20M1064.5 728v21M1065.5 683v50M1066.5 616v72M1067.5 537v84M1068.5 458v84M1069.5 390v73M1070.5 343v52M1071.5 324v24M1072.5 323v17M1073.5 335v46M1074.5 376v69M1075.5 440v83M1076.5 518v85M1077.5 598v76M1078.5 669v55M1079.5 719v29M1080.5 735v14M1081.5 698v42M1082.5 637v66M1083.5 560v82M1084.5 480v85M1085.5 408v77M1086.5 353v60M1087.5 326v32M1088.5 323v11M1089.5 329v38M1090.5 362v63M1091.5 420v80M1092.5 495v86M1093.5 576v79M1094.5 650v62M1095.5 707v37M1096.5 739v10M1097.5 712v34M1098.5 656v61M1099.5 583v78M1100.5 503v85M1101.5 427v81M1102.5 367v65M1103.5 331v41M1104.5 323v13M1105.5 325v30M1106.5 350v56M1107.5 401v77M1108.5 473v85M1109.5 553v82M1110.5 630v68M1111.5 693v45M1112.5 733v16M1113.5 723v25M1114.5 674v54M1115.5 605v74M1116.5 526v84M1117.5 447v84M1118.5 382v70M1119.5 338v49M1120.5 323v20M1121.5 323v22M1122.5 340v49M1123.5 384v72M1124.5 451v84M1125.5 530v84M1126.5 609v73M1127.5 677v52M1128.5 724v25M1129.5 732v17M1130.5 691v46M1131.5 627v69M1132.5 549v83M1133.5 469v85M1134.5 398v76M1135.5 348v55M1136.5 324v29M1137.5 323v14M1138.5 332v42M1139.5 369v66M1140.5 430v82M1141.5 507v85M1142.5 587v78M1143.5 660v59M1144.5 714v32M1145.5 738v11M1146.5 705v38M1147.5 647v63M1148.5 572v80M1149.5 491v86M1150.5 417v79M1151.5 360v62M1152.5 328v37M1153.5 323v10M1154.5 327v34M1155.5 356v60M1156.5 411v78M1157.5 484v85M1158.5 564v81M1159.5 640v66M1160.5 701v40M1161.5 736v13M1162.5 718v29M1163.5 666v57M1164.5 595v76M1165.5 514v86M1166.5 437v82M1167.5 374v68M1168.5 334v45M1169.5 323v16M1170.5 324v25M1171.5 344v54M1172.5 393v74M1173.5 462v84M1174.5 541v84M1175.5 620v71M1176.5 686v48M1177.5 729v20M1178.5 728v21M1179.5 683v50M1180.5 616v72M1181.5 538v83M1182.5 458v85M1183.5 390v73M1184.5 343v52M1185.5 324v24M1186.5 323v17M1187.5 335v46M1188.5 376v69M1189.5 440v83M1190.5 518v85M1191.5 598v76M1192.5 669v55M1193.5 719v29M1194.5 735v14M1195.5 698v42M1196.5 637v66M1197.5 561v81M1198.5 480v86M1199.5 408v77M1200.5 354v59M1201.5 326v33M1202.5 323v11M1203.5 329v38M1204.5 362v63M1205.5 420v80M1206.5 495v86M1207.5 576v79M1208.5 650v62M1209.5 707v37M1210.5 739v10M1211.5 712v34M1212.5 657v60M1213.5 583v79M1214.5 503v85M1215.5 427v81M1216.5 367v65M1217.5 331v41M1218.5 323v13M1219.5 325v30M1220.5 350v56M1221.5 401v77M1222.5 473v85M1223.5 553v82M1224.5 630v68M1225.5 693v45M1226.5 733v16M1227.5 723v25M1228.5 675v53M1229.5 606v74M1230.5 526v85M1231.5 448v83M1232.5 382v71M1233.5 338v49M1234.5 323v20M1235.5 323v22M1236.5 340v49M1237.5 384v72M1238.5 451v84M1239.5 530v49M1240.5 574v41M1241.5 609v20M1242.5 623v6M1243.5 623v6M1244.5 616v13M1245.5 583v39M1246.5 543v46M1247.5 502v47M1248.5 466v41M1249.5 447v24M1250.5 447v6M1251.5 447v6M1252.5 447v9M1253.5 450v37M1254.5 482v45M1255.5 521v47M1256.5 563v43M1257.5 600v29M1258.5 623v6M1259.5 623v6M1260.5 623v6M1261.5 594v35M1262.5 555v44M1263.5 514v47M1264.5 475v44M1265.5 447v34M1266.5 447v6M1267.5 447v6M1268.5 447v6M1269.5 447v30M1270.5 472v43M1271.5 510v46M1272.5 551v45M1273.5 590v37M1274.5 621v8M1275.5 623v6M1276.5 623v6M1277.5 604v25M1278.5 567v42M1279.5 525v47M1280.5 486v45M1281.5 453v38M1282.5 447v11M1283.5 447v6M1284.5 447v6M1285.5 447v21M1286.5 463v41M1287.5 498v47M1288.5 539v46M1289.5 580v39M1290.5 614v15M1291.5 623v6M1292.5 623v6M1293.5 612v17M1294.5 578v40M1295.5 537v46M1296.5 496v47M1297.5 461v41M1298.5 447v20M1299.5 447v6M1300.5 447v6M1301.5 447v13M1302.5 454v39M1303.5 487v46M1304.5 527v47M1305.5 568v42M1306.5 605v24M1307.5 623v6M1308.5 623v6M1309.5 620v9M1310.5 589v37M1311.5 549v45M1312.5 508v47M1313.5 470v43M1314.5 447v29M1315.5 447v6M1316.5 447v6M1317.5 447v6M1318.5 447v35M1319.5 477v44M1320.5 515v47M1321.5 557v44M1322.5 595v34M1323.5 623v6M1324.5 623v6M1325.5 623v6M1326.5 599v30M1327.5 561v43M1328.5 520v46M1329.5 480v45M1330.5 449v37M1331.5 447v8M1332.5 447v6M1333.5 447v6M1334.5 447v25M1335.5 467v42M1336.5 504v46M1337.5 545v45M1338.5 585v38M1339.5 618v11M1340.5 623v6M1341.5 623v6M1342.5 608v21M1343.5 573v41M1344.5 531v47M1345.5 491v46M1346.5 457v39M1347.5 447v15M1348.5 447v6M1349.5 447v6M1350.5 447v17M1351.5 458v40M1352.5 493v46M1353.5 533v46M1354.5 574v41M1355.5 609v20M1356.5 623v6M1357.5 623v6M1358.5 617v12M1359.5 584v38M1360.5 543v46M1361.5 502v47M1362.5 466v42M1363.5 447v24M1364.5 447v6M1365.5 447v6M1366.5 447v9M1367.5 450v37M1368.5 482v45M1369.5 521v47M1370.5 563v43M1371.5 600v29M1372.5 623v6M1373.5 623v6M1374.5 623v6M1375.5 594v35M1376.5 555v44M1377.5 514v47M1378.5 475v44M1379.5 447v34M1380.5 447v6M1381.5 447v6M1382.5 447v6M1383.5 447v30M1384.5 472v43M1385.5 509v47M1386.5 551v45M1387.5 590v37M1388.5 621v8M1389.5 623v6M1390.5 623v6M1391.5 604v25M1392.5 567v42M1393.5 526v46M1394.5 486v45M1395.5 453v38M1396.5 447v11M1397.5 447v6M1398.5 447v6M1399.5 447v21M1400.5 462v41M1401.5 498v46M1402.5 539v46M1403.5 580v39M1404.5 614v15M1405.5 623v6M1406.5 623v6M1407.5 612v17M1408.5 578v40M1409.5 537v47M1410.5 497v46M1411.5 461v41M1412.5 447v20M1413.5 447v6M1414.5 447v6M1415.5 447v12M1416.5 454v38M1417.5 487v46M1418.5 527v47M1419.5 568v42M1420.5 605v24M1421.5 623v6M1422.5 623v6M1423.5 620v9M1424.5 589v37M1425.5 549v45M1426.5 508v47M1427.5 470v43M1428.5 447v29M1429.5 447v6M1430.5 447v6M1431.5 447v6M1432.5 447v35M1433.5 477v44M1434.5 515v47M1435.5 557v44M1436.5 595v34M1437.5 623v6M1438.5 623v6M1439.5 623v6M1440.5 599v30M1441.5 561v43M1442.5 520v47M1443.5 480v45M1444.5 449v37M1445.5 447v8M1446.5 447v6M1447.5 447v6M1448.5 447v25M1449.5 467v42M1450.5 504v46M1451.5 545v45M1452.5 585v38M1453.5 618v11M1454.5 623v6M1455.5 623v6M1456.5 608v21M1457.5 573v41M1458.5 532v46M1459.5 491v46M1460.5 457v39M1461.5 447v15M1462.5 447v6M1463.5 447v6M1464.5 447v17M1465.5 458v40M1466.5 492v46M1467.5 533v46M1468.5 574v41M1469.5 609v20M1470.5 623v6M1471.5 623v6M1472.5 617v12M1473.5 584v38M1474.5 544v45M1475.5 502v47M1476.5 466v42M1477.5 447v24M1478.5 447v6M1479.5 447v6M1480.5 447v9M1481.5 450v37M1482.5 482v45M1483.5 521v47M1484.5 563v43M1485.5 600v29M1486.5 623v6M1487.5 623v6M1488.5 623v6M1489.5 594v35M1490.5 555v44M1491.5 514v47M1492.5 475v44M1493.5 447v34M1494.5 447v6M1495.5 447v6M1496.5 447v6M1497.5 447v30M1498.5 472v43M1499.5 509v47M1500.5 551v45M1501.5 590v37M1502.5 621v8M1503.5 623v6M1504.5 623v6M1505.5 604v25M1506.5 567v42M1507.5 526v46M1508.5 486v45M1509.5 453v38M1510.5 447v11M1511.5 447v6M1512.5 447v6M1513.5 447v21M1514.5 462v41M1515.5 498v46M1516.5 539v46M1517.5 580v39M1518.5 614v15M1519.5 623v6M1520.5 623v6M1521.5 613v16M1522.5 578v40M1523.5 538v46M1524.5 497v46M1525.5 461v41M1526.5 447v20M1527.5 447v6M1528.5 447v6M1529.5 447v12M1530.5 454v38M1531.5 487v45M1532.5 527v47M1533.5 568v42M1534.5 605v24M1535.5 623v6M1536.5 623v6M1537.5 620v9M1538.5 589v37M1539.5 550v44M1540.5 508v47M1541.5 471v42M1542.5 447v29M1543.5 447v6M1544.5 447v6M1545.5 447v6M1546.5 447v35M1547.5 477v44M1548.5 515v47M1549.5 557v44M1550.5 595v34M1551.5 623v6M1552.5 623v6M1553.5 623v6M1554.5 599v30M1555.5 561v43M1556.5 520v47M1557.5 480v45M1558.5 449v37M1559.5 447v8M1560.5 447v6M1561.5 447v6M1562.5 447v25M1563.5 467v42M1564.5 504v46M1565.5 545v45M1566.5 585v38M1567.5 618v11M1568.5 623v6M1569.5 623v6M1570.5 608v21M1571.5 573v41M1572.5 532v46M1573.5 491v46M1574.5 457v40M1575.5 447v16M1576.5 447v6M1577.5 447v6M1578.5 370v83M1579.5 384v71M1580.5 450v84M1581.5 529v84M1582.5 608v74M1583.5 677v52M1584.5 724v24M1585.5 732v17M1586.5 691v46M1587.5 627v69M1588.5 550v82M1589.5 470v85M1590.5 399v76M1591.5 348v56M1592.5 325v28M1593.5 323v14M1594.5 332v42M1595.5 369v66M1596.5 430v81M1597.5 506v85M1598.5 586v78M1599.5 659v59M1600.5 713v33M1601.5 738v11M1602.5 706v37M1603.5 647v64M1604.5 573v79M1605.5 492v86M1606.5 418v79M1607.5 360v63M1608.5 328v37M1609.5 323v10M1610.5 326v34M1611.5 355v60M1612.5 410v78M1613.5 483v86M1614.5 564v81M1615.5 640v65M1616.5 700v41M1617.5 736v13M1618.5 718v29M1619.5 666v57M1620.5 595v76M1621.5 515v85M1622.5 438v82M1623.5 374v69M1624.5 334v45M1625.5 323v16M1626.5 324v25M1627.5 344v53M1628.5 392v74M1629.5 461v85M1630.5 541v83M1631.5 619v71M1632.5 685v49M1633.5 729v20M1634.5 728v21M1635.5 683v50M1636.5 617v71M1637.5 538v84M1638.5 459v84M1639.5 390v74M1640.5 343v52M1641.5 324v24M1642.5 323v17M1643.5 335v46M1644.5 376v69M1645.5 440v82M1646.5 517v85M1647.5 597v76M1648.5 668v56M1649.5 719v29M1650.5 735v14M1651.5 699v41M1652.5 638v66M1653.5 561v82M1654.5 481v85M1655.5 408v78M1656.5 354v59M1657.5 326v33M1658.5 323v11M1659.5 329v38M1660.5 362v63M1661.5 420v79M1662.5 494v86M1663.5 575v80M1664.5 650v62M1665.5 707v37M1666.5 739v10M1667.5 712v34M1668.5 657v60M1669.5 584v78" stroke="#1313b8" stroke-width="1" fill="none"/>
</svg>
<div class="yl" style="top:114px">5,0</div><div class="yl" style="top:198px">4,0</div><div class="yl" style="top:281px">3,0</div><div class="yl" style="top:365px">2,0</div><div class="yl" style="top:448px">1,0</div><div class="yl" style="top:531px">0,0</div><div class="yl" style="top:615px">-1,0</div><div class="yl" style="top:698px">-2,0</div><div class="yl" style="top:782px">-3,0</div><div class="yl" style="top:865px">-4,0</div><div class="yl" style="top:948px">-5,0</div>
<div class="xl" style="left:12px">-1,0</div><div class="xl" style="left:175px">-0,8</div><div class="xl" style="left:338px">-0,6</div><div class="xl" style="left:501px">-0,4</div><div class="xl" style="left:664px">-0,2</div><div class="xl" style="left:827px">0,0</div><div class="xl" style="left:990px">0,2</div><div class="xl" style="left:1152px">0,4</div><div class="xl" style="left:1315px">0,6</div><div class="xl" style="left:1478px">0,8</div><div class="xl" style="left:1641px">1,0</div>

<!-- scope markers -->
<div class="a" style="left:3px;top:119px;width:9px;height:9px;background:#0000ff;border-right:1px solid #00006a;border-bottom:1px solid #00006a"></div>
<div class="a" style="left:0;top:110px;width:1px;height:889px;background:#7a7a7a"></div>
<div class="yl" style="top:133px">V</div>
<div class="a" style="left:37px;top:952px;width:9px;height:9px;border:1px solid #000;background:#fff"></div>
<div class="a" style="left:5px;top:982px;width:35px;height:13px;background:#7f7ffa;color:#eef;font-size:9.5px;text-align:center;line-height:14px">x1,0</div>
<div class="txt" style="left:43px;top:982px;font-size:12px;color:#000">s</div>
<svg class="a" style="left:850px;top:533px" width="13" height="13"><path d="M6.5 1L12 6.5L6.5 12L1 6.5z" fill="#ffff00" stroke="#202020" stroke-width="1"/></svg>
<svg class="a" style="left:1664px;top:950px" width="13" height="13"><circle cx="6.5" cy="6.5" r="5.2" fill="#108a8a" stroke="#000" stroke-width="1"/></svg>

<!-- panel -->
<div id="panel" class="a">
  <div id="phead" class="a"><div class="txt" style="left:7px;top:6px">Eigenschaften</div>
    <svg class="a" style="left:213px;top:6px" width="11" height="11"><path d="M1 1L10 10M10 1L1 10" stroke="#fff" stroke-width="2.2"/></svg>
  </div>
</div>
<div class="pr" style="left:1698px;top:142px">Abtastintervall</div>
<div class="pr" style="left:1790px;top:142px;width:105px;text-align:right">2 µs</div>
<div class="pr" style="left:1698px;top:162px">Abtastrate</div>
<div class="pr" style="left:1790px;top:162px;width:104.5px;text-align:right">500 kS/s</div>
<div class="pr" style="left:1698px;top:182px">Anzahl Segmente</div>
<div class="pr" style="left:1790px;top:182px;width:105px;text-align:right;letter-spacing:-0.6px">1.000.000</div>
<div class="a" style="left:1696px;top:206px;width:200px;height:62px;border:1px solid #1a1a90"></div>
<div class="pr" style="left:1702px;top:211px">Kanal</div>
<div class="pr" style="left:1790px;top:211px;width:100px;text-align:right">A</div>
<div class="pr" style="left:1702px;top:231px">Bereich</div>
<div class="pr" style="left:1790px;top:231px;width:100px;text-align:right">±5 V</div>
<div class="pr" style="left:1702px;top:251px">Kopplung</div>
<div class="pr" style="left:1790px;top:251px;width:101px;text-align:right">DC</div>
<div class="pr" style="left:1698px;top:326px">Aufnahmedatum</div>
<div class="pr" style="left:1790px;top:324px;width:104px;text-align:right;letter-spacing:-0.5px">12.11.2023</div>
<div class="pr" style="left:1698px;top:346px">Aufnahmezeit</div>
<div class="pr" style="left:1790px;top:344px;width:105px;text-align:right;letter-spacing:-0.6px">11:41:40</div>

<!-- bottom -->
<div class="a" style="left:0;top:999px;width:1689px;height:1px;background:#7c746a"></div>
<div id="bottom" class="a"></div>
<div class="a" style="left:0;top:1031px;width:1920px;height:2px;background:#e8e7e8"></div>
<div class="txt" style="left:8px;top:1008px;color:#000;font-size:12px;">Gestoppt</div><svg class="a" style="left:72px;top:1009px" width="8" height="12"><path d="M0 0V12L8 6z" fill="#2e8a2e"/></svg><div class="selbtn" style="left:88px;top:1002px;width:26px;height:26px"></div><div class="a" style="left:95px;top:1009px;width:12px;height:12px;background:#fff"></div><div class="a" style="left:96px;top:1010px;width:10px;height:10px;background:#ff1a00"></div><div class="sep" style="left:116px;top:1004px;height:24px"></div><div class="txt" style="left:122px;top:1008px;color:#000;font-size:12px;">Trigger</div><div class="a" style="left:170px;top:1002px;width:105px;height:26px;background:#fff;border:1px solid #c6beb4"></div><div class="txt" style="left:174px;top:1008px;color:#000;font-size:12px;">Wiederholen</div><svg class="a" style="left:256px;top:1013px" width="10" height="6"><path d="M0 0H10L5 6z" fill="#8a8a8a"/></svg><svg class="a" style="left:280px;top:1005px" width="20" height="20"><rect x="8" y="3" width="7" height="15" fill="#c4dcf4"/><path d="M2 14.5H6.5V7.5H11V14.5H17.5" fill="none" stroke="#000" stroke-width="1.3"/><path d="M11 2H18V9z" fill="#000"/><ellipse cx="11.5" cy="11.5" rx="1.4" ry="1.8" fill="#30b040"/></svg><div class="sep" style="left:305px;top:1004px;height:24px"></div><div class="a" style="left:311px;top:1002px;width:53px;height:26px;background:#fff;border:1px solid #c6beb4"></div><div class="txt" style="left:315px;top:1008px;color:#000;font-size:12px;">A</div><svg class="a" style="left:345px;top:1013px" width="10" height="6"><path d="M0 0H10L5 6z" fill="#8a8a8a"/></svg><div class="sep" style="left:370px;top:1004px;height:24px"></div><div class="selbtn" style="left:374px;top:1002px;width:26px;height:26px"></div><svg class="a" style="left:379px;top:1006px" width="16" height="18"><path d="M1.2 15L10.9 4.4H15" fill="none" stroke="#101030" stroke-width="1.2"/><path d="M7.5 3.5L6 6H9zM7.5 9L6 6.5H9zM7.5 11L6 13.5H9zM7.5 16.5L6 14H9z" fill="#1020d0"/><path d="M7.5 3.5V16.5" stroke="#1020d0" stroke-width="0.8"/></svg><svg class="a" style="left:405px;top:1006px" width="16" height="18"><path d="M0.9 4.4H4.5L14.5 15" fill="none" stroke="#101030" stroke-width="1.2"/><path d="M8.5 3.5L6 6H10zM8.5 9L6 6.5H10zM8.5 11L6 13.5H10zM8.5 16.5L6 14H10z" fill="#1020d0"/><path d="M8.5 3.5V16.5" stroke="#1020d0" stroke-width="0.8"/></svg><div class="sep" style="left:428px;top:1004px;height:24px"></div><div class="nav" style="left:436px;top:1002px;width:109px;height:26px;border-color:#9b8d80"></div><div class="a" style="left:461px;top:1002px;width:59px;height:26px;background:#fff;border:1px solid #8c7d70;border-left-width:1px"></div><svg class="a" style="left:446px;top:1010px" width="6" height="10"><path d="M6 0V10L0 5z" fill="#1478c8"/></svg><svg class="a" style="left:530px;top:1010px" width="6" height="10"><path d="M0 0V10L6 5z" fill="#1478c8"/></svg><div class="txt" style="left:467px;top:1008px;color:#000;font-size:12px;">0 V</div><div class="sep" style="left:549px;top:1004px;height:24px"></div><div class="nav" style="left:557px;top:1002px;width:109px;height:26px;border-color:#9b8d80"></div><div class="a" style="left:582px;top:1002px;width:59px;height:26px;background:#fff;border:1px solid #8c7d70;border-left-width:1px"></div><svg class="a" style="left:567px;top:1010px" width="6" height="10"><path d="M6 0V10L0 5z" fill="#1478c8"/></svg><svg class="a" style="left:651px;top:1010px" width="6" height="10"><path d="M0 0V10L6 5z" fill="#1478c8"/></svg><div class="txt" style="left:588px;top:1008px;color:#000;font-size:12px;">50 %</div><svg class="a" style="left:673px;top:1006px" width="18" height="16"><path d="M1 12L6 3L11 9L16 5" fill="none" stroke="#b0b8c0" stroke-width="1.3"/><path d="M11 8L16 13M16 8L11 13" stroke="#b0b8c0" stroke-width="1"/></svg><div class="nav" style="left:699px;top:1002px;width:108px;height:26px;border-color:#c4bcb2"></div><div class="a" style="left:724px;top:1002px;width:58px;height:26px;background:#fff;border:1px solid #c4bcb2;border-left-width:1px"></div><svg class="a" style="left:709px;top:1010px" width="6" height="10"><path d="M6 0V10L0 5z" fill="#8cbde3"/></svg><svg class="a" style="left:792px;top:1010px" width="6" height="10"><path d="M0 0V10L6 5z" fill="#8cbde3"/></svg><div class="txt" style="left:730px;top:1008px;color:#c0c0c0;font-size:12px;">0 s</div><div class="sep" style="left:811px;top:1004px;height:24px"></div><div class="txt" style="left:819px;top:1008px;color:#000;font-size:12px;">Messungen</div><svg class="a" style="left:889px;top:1007px" width="16" height="16"><rect x="0.5" y="0.5" width="15" height="15" rx="1.5" fill="#2aa02a" stroke="#106a10"/><path d="M7.5 3.5V11.5M3.5 7.5H11.5" stroke="#fff" stroke-width="2.2"/></svg><svg class="a" style="left:915px;top:1007px" width="16" height="16"><rect x="0.5" y="0.5" width="15" height="15" rx="1.5" fill="#c8dcc8" stroke="#b8ccb8"/><path d="M3.5 7.5H11.5" stroke="#eef4ee" stroke-width="2.2"/></svg><svg class="a" style="left:940px;top:1007px" width="16" height="16"><rect x="0.5" y="0.5" width="15" height="15" rx="1.5" fill="#c8dcc8" stroke="#b8ccb8"/><path d="M7.5 3.5L12 10.5H3z" fill="#eef4ee"/></svg><div class="sep" style="left:963px;top:1004px;height:24px"></div><div class="txt" style="left:971px;top:1008px;color:#000;font-size:12px;">Lineale</div><svg class="a" style="left:1017px;top:1007px" width="16" height="16"><rect x="0.5" y="0.5" width="15" height="15" rx="1.5" fill="#2aa02a" stroke="#106a10"/><path d="M7.5 3.5L12 10.5H3z" fill="#fff"/></svg><div class="txt" style="left:1041px;top:1008px;color:#000;font-size:12px;">Notizen</div><svg class="a" style="left:1089px;top:1007px" width="16" height="16"><rect x="0.5" y="0.5" width="15" height="15" rx="1.5" fill="#2aa02a" stroke="#106a10"/><path d="M7.5 3.5L12 10.5H3z" fill="#fff"/></svg>

</body></html>
